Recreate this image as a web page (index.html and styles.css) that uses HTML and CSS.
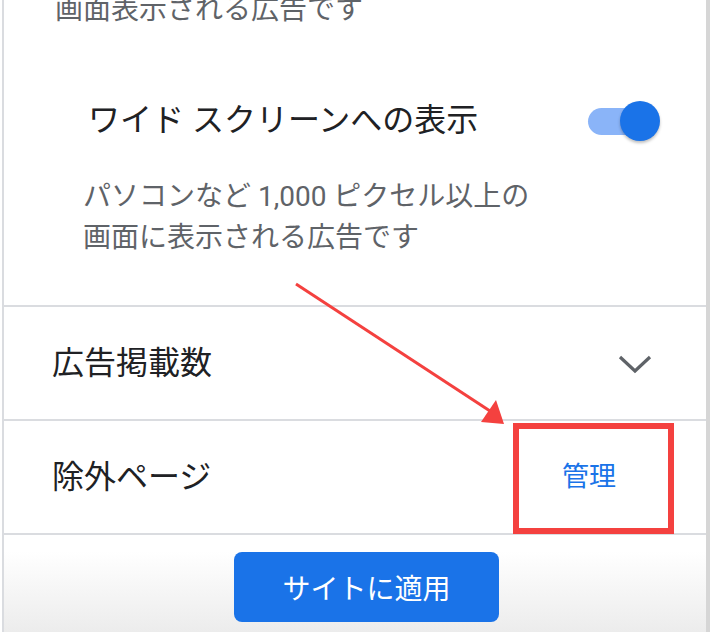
FILE: index.html
```html
<!DOCTYPE html>
<html lang="ja">
<head>
    <meta charset="UTF-8">
    <meta name="viewport" content="width=device-width, initial-scale=1.0">
    <title>広告の設定</title>
    <link rel="stylesheet" href="styles.css">
</head>
<body>
    <div class="screen">
        <div class="panel">
            <div class="format-group">
                <p class="prev-desc">画面表示される広告です</p>

                <div class="format-title">
                    <span>ワイド スクリーンへの表示</span>
                    <div class="switch">
                        <div class="track"></div>
                        <div class="thumb"></div>
                    </div>
                </div>
                <p class="format-desc">パソコンなど 1,000 ピクセル以上の<br>画面に表示される広告です</p>
            </div>

            <div class="row">
                <span class="label">広告掲載数</span>
                <svg class="chevron" width="34" height="20" viewBox="0 0 34 20">
                    <polyline points="2,3 17,17 32,3" fill="none" stroke="#5f6368" stroke-width="3.2"/>
                </svg>
            </div>

            <div class="row">
                <span class="label">除外ページ</span>
                <a class="manage" href="#">管理</a>
            </div>

            <div class="bottom-bar">
                <button class="apply">サイトに適用</button>
            </div>
        </div>

        <!-- annotation drawn over the screenshot -->
        <svg class="markup" width="712" height="632" viewBox="0 0 712 632">
            <line x1="296" y1="284" x2="490" y2="411" stroke="#f4413f" stroke-width="3"/>
            <polygon points="504,424 481,422 496,400" fill="#f4413f"/>
            <rect x="516" y="426" width="155" height="105" fill="none" stroke="#f4413f" stroke-width="6"/>
        </svg>
    </div>
</body>
</html>
```

FILE: styles.css
```css
body {
    margin: 0;
    overflow: hidden;
    background: #ffffff;
    font-family: Roboto, "Noto Sans CJK JP", sans-serif;
}
.screen {
    position: relative;
    width: 712px;
    height: 632px;
    overflow: hidden;
}
.panel {
    margin-left: 2px;
    width: 702px;
    height: 645px;
    border-left: 2px solid #dadce0;
    border-right: 4px solid #d6d6d6;
    display: flex;
    flex-direction: column;
}
.format-group {
    margin-top: -11px;
    padding-bottom: 47px;
}
.prev-desc {
    margin: 0;
    padding-left: 51px;
    font-size: 28px;
    line-height: 41px;
    color: #5f6368;
}
.format-title {
    display: flex;
    align-items: center;
    justify-content: space-between;
    margin-top: 70px;
    padding-left: 84px;
    padding-right: 46px;
    font-size: 32px;
    line-height: 41px;
    color: #202124;
}
.switch {
    position: relative;
    width: 72px;
    height: 40px;
}
.track {
    position: absolute;
    left: 0;
    top: 7px;
    width: 66px;
    height: 27px;
    border-radius: 14px;
    background: #8ab4f8;
}
.thumb {
    position: absolute;
    left: 32px;
    top: 0;
    width: 40px;
    height: 40px;
    border-radius: 50%;
    background: #1a73e8;
    box-shadow: 0 2px 3px rgba(0, 0, 0, 0.25);
}
.format-desc {
    margin: 35px 0 0 0;
    padding-left: 79px;
    font-size: 28px;
    line-height: 41px;
    color: #5f6368;
}
.row {
    height: 112px;
    border-top: 2px solid #dadce0;
    display: flex;
    align-items: center;
    justify-content: space-between;
    padding: 0 54px 0 48px;
}
.label {
    margin-bottom: 6px;
    font-size: 32px;
    color: #202124;
}
.chevron {
    display: block;
    margin-top: 2px;
}
.manage {
    margin-right: 36px;
    margin-bottom: 6px;
    font-size: 27px;
    color: #1a73e8;
    text-decoration: none;
}
.bottom-bar {
    flex: 1;
    border-top: 2px solid #dadce0;
    padding: 17px 0 0 230px;
    background: linear-gradient(#ffffff 15%, #e9e9e9 100%);
}
.apply {
    width: 265px;
    height: 70px;
    border: 0;
    border-radius: 8px;
    background: #1a73e8;
    color: #ffffff;
    font-family: Roboto, "Noto Sans CJK JP", sans-serif;
    font-size: 28px;
}
.markup {
    position: absolute;
    left: 0;
    top: 0;
}
```
